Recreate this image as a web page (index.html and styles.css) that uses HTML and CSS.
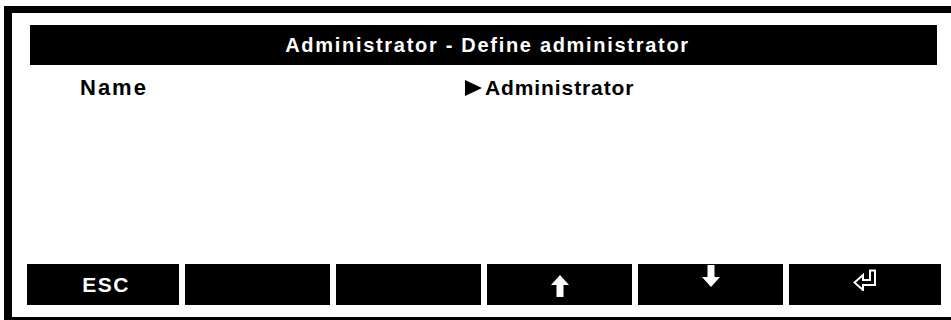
FILE: index.html
```html
<html lang="en">

<head>
    <meta charset="UTF-8">
    <title>Administrator</title>
    <link rel="stylesheet" href="styles.css">
</head>

<body>
    <div id="screen">
        <div id="title">Administrator - Define administrator</div>
        <div class="row">
            <span class="label">Name</span>
            <span class="value">
                <svg class="pointer" width="17" height="16" viewBox="0 0 17 16">
                    <polygon points="0,0 17,8 0,16" fill="#000" />
                </svg>Administrator</span>
        </div>
        <div id="keys">
            <div class="key wide esc">ESC</div>
            <div class="key"></div>
            <div class="key"></div>
            <div class="key">
                <svg class="up" width="18" height="22" viewBox="0 0 18 22">
                    <polygon points="9,0 18,10 12.5,10 12.5,22 5.5,22 5.5,10 0,10" fill="#fff" />
                </svg>
            </div>
            <div class="key">
                <svg class="down" width="18" height="22" viewBox="0 0 18 22">
                    <polygon points="5.5,0 12.5,0 12.5,12 18,12 9,22 0,12 5.5,12" fill="#fff" />
                </svg>
            </div>
            <div class="key wide">
                <svg class="enter" width="24" height="22" viewBox="0 0 24 22">
                    <polygon points="17,1.5 22,1.5 22,16 10,16 10,21 1.5,13.5 10,6 10,11 17,11"
                        fill="#000" stroke="#fff" stroke-width="2" stroke-linejoin="miter" />
                </svg>
            </div>
        </div>
    </div>
</body>

</html>
```

FILE: styles.css
```css
body {
    margin: 0px;
    padding: 0px;
    background: #FFF;
    font-family: "Liberation Sans", Arial, sans-serif;
    font-weight: bold;
}

#screen {
    margin: 6px 0 0 4px;
    height: 304px;
    border-top: 7px solid #000;
    border-left: 8px solid #000;
    border-bottom: 3px solid #000;
    display: flex;
    flex-direction: column;
}

#title {
    margin: 12px 0 0 18px;
    padding-left: 8px;
    width: 899px;
    height: 40px;
    line-height: 40px;
    background: #000;
    color: #FFF;
    font-size: 20px;
    letter-spacing: 1.7px;
    text-align: center;
}

.row {
    margin-top: 11px;
    display: flex;
    font-size: 21px;
    line-height: 24px;
    color: #000;
}

.label {
    width: 385px;
    padding-left: 68px;
    font-size: 22px;
    letter-spacing: 2px;
}

.value {
    display: flex;
    align-items: center;
    letter-spacing: 0.9px;
}

.pointer {
    margin-right: 3px;
}

#keys {
    margin: auto 0 12px 15px;
    display: flex;
    gap: 6px;
}

.key {
    width: 145px;
    height: 41px;
    background: #000;
    color: #FFF;
    font-size: 21px;
    display: flex;
    align-items: center;
    justify-content: center;
    letter-spacing: 1.5px;
}

.key.wide {
    width: 152px;
}

.key.esc {
    padding-left: 6px;
    width: 146px;
}

.up {
    margin-top: 3px;
}

.down {
    margin-top: -17px;
}

.enter {
    margin-top: -9px;
}
```
